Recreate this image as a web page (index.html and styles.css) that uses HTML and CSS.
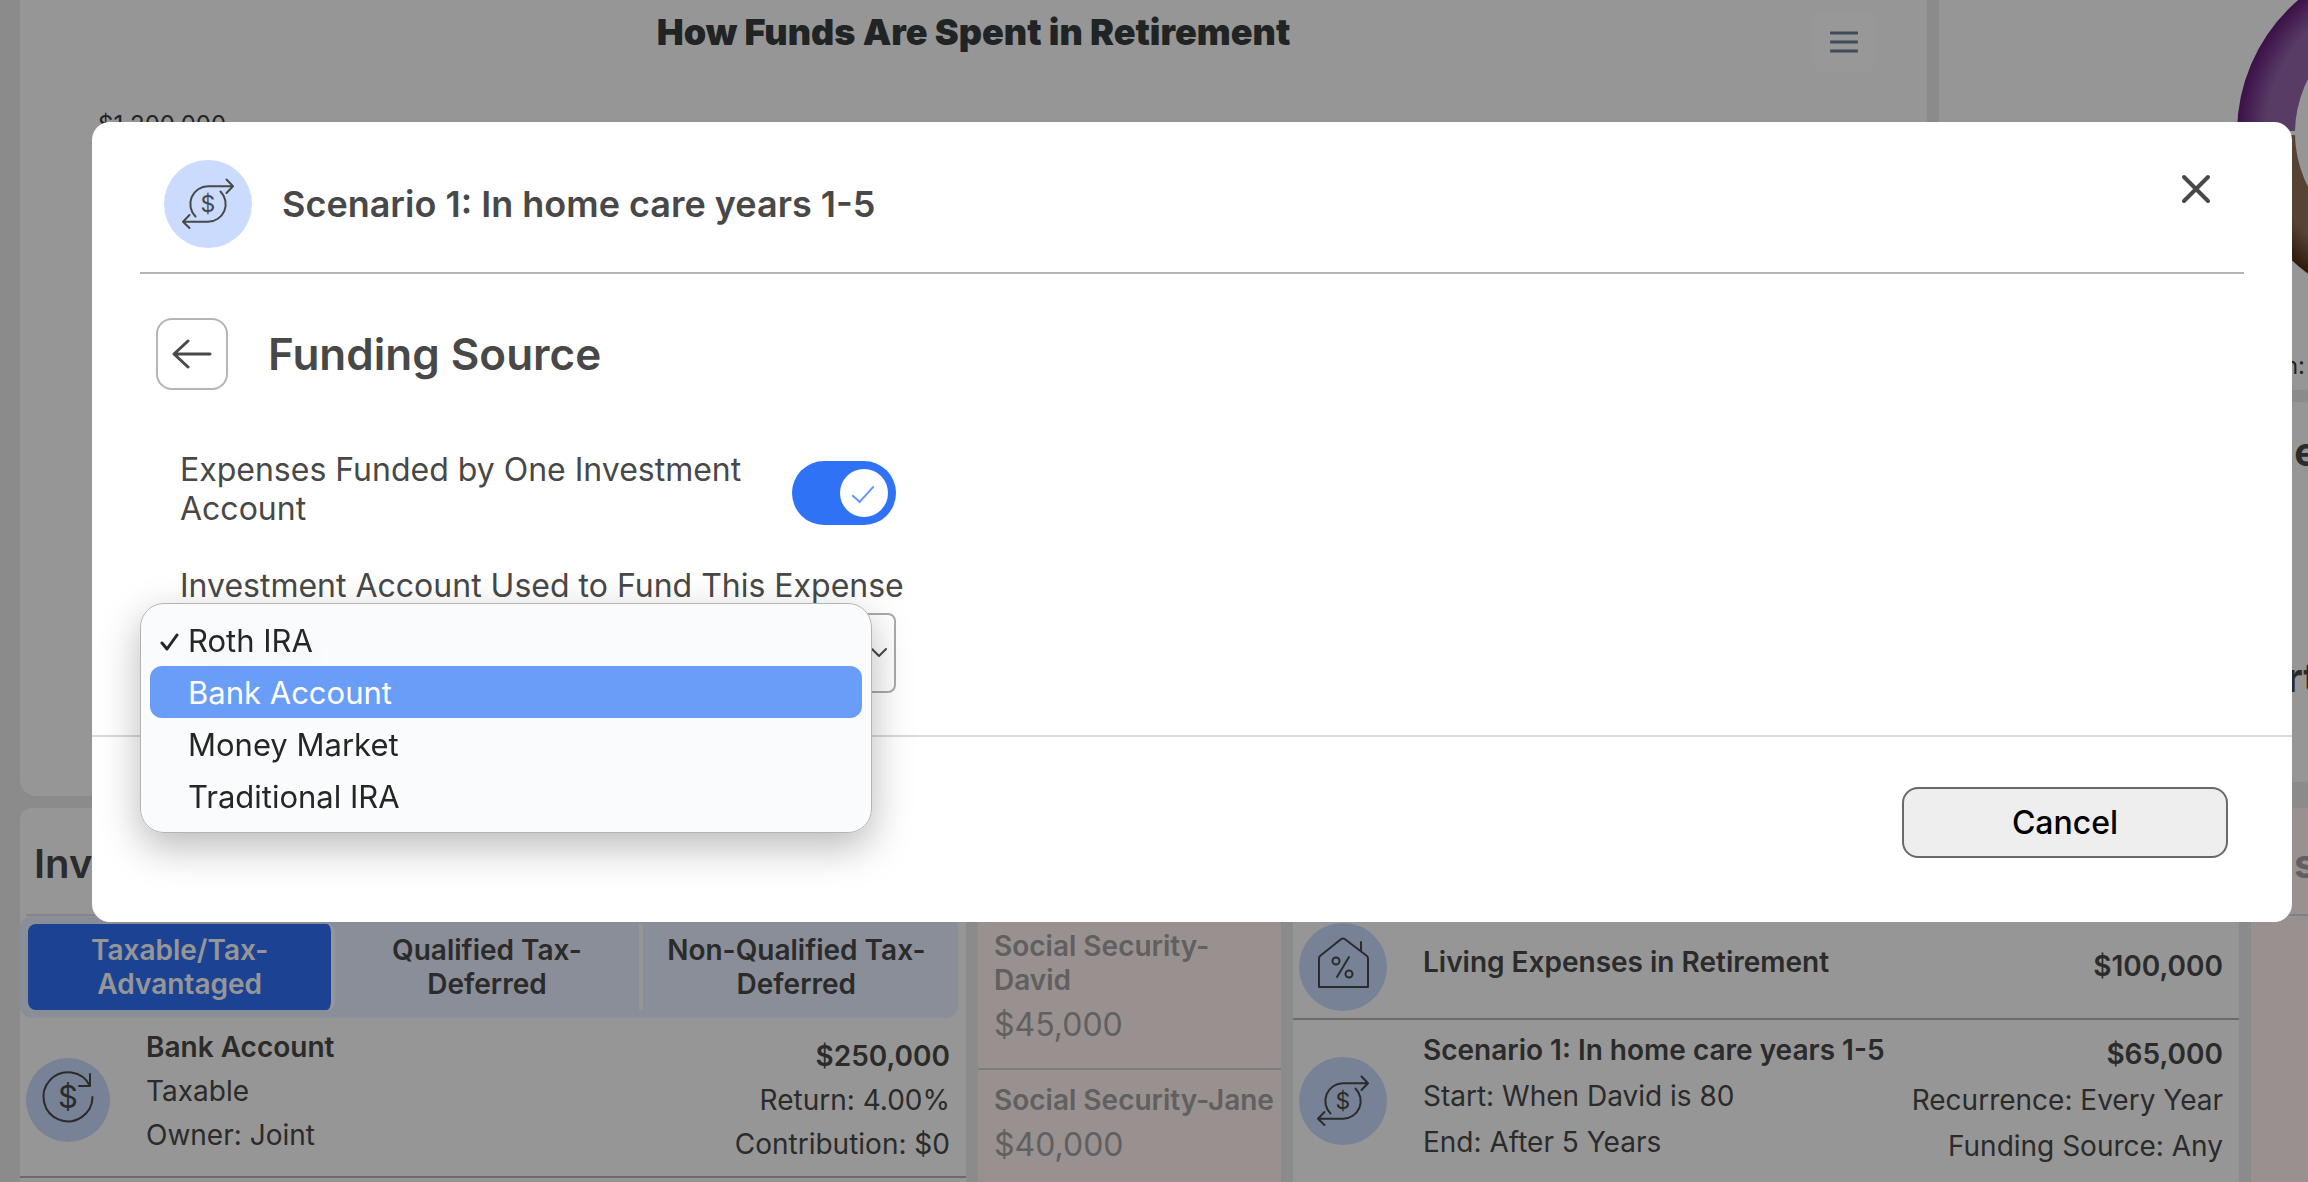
FILE: index.html
```html
<!DOCTYPE html>
<html lang="en">
<head>
    <meta charset="UTF-8">
    <meta name="viewport" content="width=device-width, initial-scale=1.0">
    <title>Funding Source</title>
    <link rel="stylesheet" href="styles.css">
</head>
<body>

<!-- shared icons -->
<svg class="sprite" aria-hidden="true">
    <symbol id="icon-cycle" viewBox="0 0 88 88">
        <path d="M31.500 56.500A17.700 17.700 0 0 1 44 26.300H69M62.500 19.500L69 26.300L62.500 33"/>
        <path d="M56.500 31.500A17.700 17.700 0 0 1 44 61.700H19.500M25.500 55L19 61.700L25.500 68"/>
        <text x="44" y="52" font-size="23">$</text>
    </symbol>
    <symbol id="icon-return" viewBox="0 0 84 84">
        <path d="M64 28A24.5 24.5 0 1 0 66.500 39M64 16V28H53"/>
        <text x="42" y="50" font-size="31">$</text>
    </symbol>
    <symbol id="icon-house" viewBox="0 0 88 88">
        <path d="M20 64V36Q20 34 21 33L41 17Q44 14 47 17L68 33Q69 34 69 36V64ZM62 19V28"/>
        <circle cx="37" cy="38" r="3.500"/>
        <circle cx="50" cy="51" r="3.500"/>
        <path d="M50 34L38 54"/>
    </symbol>
</svg>

<main class="dashboard">
    <div class="top-row">
        <section class="card chart-card">
            <header class="chart-header">
                <h2 class="chart-title">How Funds Are Spent in Retirement</h2>
                <button class="menu-button" type="button" aria-label="Chart menu">
                    <svg width="28" height="24" viewBox="0 0 28 24"><path d="M1 3H27M1 12H27M1 21H27"/></svg>
                </button>
            </header>
            <div class="axis-label">$1,200,000</div>
        </section>

        <div class="side-column">
            <section class="card donut-card">
                <svg class="donut" width="369" height="310" viewBox="0 0 369 310">
                    <defs>
                        <radialGradient id="purple" gradientUnits="userSpaceOnUse" cx="473" cy="133" r="175">
                            <stop offset="0.830" stop-color="#9465aa"/>
                            <stop offset="1" stop-color="#641a78"/>
                        </radialGradient>
                        <radialGradient id="brown" gradientUnits="userSpaceOnUse" cx="473" cy="133" r="175">
                            <stop offset="0.830" stop-color="#8f7158"/>
                            <stop offset="1" stop-color="#4d2b12"/>
                        </radialGradient>
                    </defs>
                    <path d="M298 131A175 175 0 0 1 473 -42V16A117 117 0 0 0 356 131Z" fill="url(#purple)"/>
                    <path d="M298 135A175 175 0 0 0 473 308V250A117 117 0 0 1 356 135Z" fill="url(#brown)"/>
                </svg>
                <div class="legend">n:</div>
            </section>
            <section class="card summary-card">
                <h2 class="side-title">ne</h2>
                <h2 class="side-title">rt</h2>
            </section>
        </div>
    </div>

    <div class="bottom-row">
        <section class="card accounts">
            <h2 class="section-title">Inv</h2>
            <div class="tabs">
                <button class="tab active" type="button">Taxable/Tax-<br>Advantaged</button>
                <button class="tab" type="button">Qualified Tax-<br>Deferred</button>
                <button class="tab" type="button">Non-Qualified Tax-<br>Deferred</button>
            </div>
            <article class="item">
                <div class="badge small"><svg><use href="#icon-return"/></svg></div>
                <div class="details">
                    <strong>Bank Account</strong>
                    <span>Taxable</span>
                    <span>Owner: Joint</span>
                </div>
                <div class="amounts">
                    <strong>$250,000</strong>
                    <span>Return: 4.00%</span>
                    <span>Contribution: $0</span>
                </div>
            </article>
        </section>

        <section class="card income">
            <div class="section-title"></div>
            <article class="income-item">
                <h3>Social Security-<br>David</h3>
                <p>$45,000</p>
            </article>
            <article class="income-item">
                <h3>Social Security-Jane</h3>
                <p>$40,000</p>
            </article>
        </section>

        <section class="card expenses">
            <div class="section-title"></div>
            <article class="item">
                <div class="badge"><svg><use href="#icon-house"/></svg></div>
                <div class="details">
                    <strong>Living Expenses in Retirement</strong>
                </div>
                <div class="amounts">
                    <strong>$100,000</strong>
                </div>
            </article>
            <article class="item">
                <div class="badge"><svg><use href="#icon-cycle"/></svg></div>
                <div class="details">
                    <strong>Scenario 1: In home care years 1-5</strong>
                    <span>Start: When David is 80</span>
                    <span>End: After 5 Years</span>
                </div>
                <div class="amounts">
                    <strong>$65,000</strong>
                    <span>Recurrence: Every Year</span>
                    <span>Funding Source: Any</span>
                </div>
            </article>
        </section>

        <section class="card income assets">
            <h2 class="section-title">s</h2>
        </section>
    </div>
</main>

<div class="overlay">
    <div class="modal" role="dialog" aria-labelledby="modal-title">
        <header class="modal-header">
            <div class="badge"><svg><use href="#icon-cycle"/></svg></div>
            <h1 class="modal-title" id="modal-title">Scenario 1: In home care years 1-5</h1>
            <button class="close-button" type="button" aria-label="Close">
                <svg width="32" height="32" viewBox="0 0 32 32"><path d="M4 4L28 28M28 4L4 28"/></svg>
            </button>
        </header>

        <div class="modal-body">
            <div class="step">
                <button class="back-button" type="button" aria-label="Back">
                    <svg width="40" height="32" viewBox="0 0 40 32"><path d="M38 16H2M16 3L2 16L16 29"/></svg>
                </button>
                <h2 class="step-title">Funding Source</h2>
            </div>

            <form class="funding-form">
                <div class="toggle-row">
                    <label for="one-account">Expenses Funded by One Investment Account</label>
                    <input class="toggle" type="checkbox" id="one-account" checked>
                </div>

                <label class="select-label" for="account">Investment Account Used to Fund This Expense</label>
                <div class="select-wrap">
                    <select id="account" name="account">
                        <option selected>Roth IRA</option>
                        <option>Bank Account</option>
                        <option>Money Market</option>
                        <option>Traditional IRA</option>
                    </select>
                    <svg class="chevron" width="18" height="12" viewBox="0 0 18 12"><path d="M2 2L9 9L16 2"/></svg>
                    <ul class="options" role="listbox" aria-label="Investment accounts">
                        <li role="option" aria-selected="true"><svg class="check" width="20" height="20" viewBox="0 0 20 20"><path d="M2 11L7 17L17 3"/></svg>Roth IRA</li>
                        <li class="highlight" role="option">Bank Account</li>
                        <li role="option">Money Market</li>
                        <li role="option">Traditional IRA</li>
                    </ul>
                </div>
            </form>
        </div>

        <footer class="modal-footer">
            <button class="cancel-button" type="button">Cancel</button>
        </footer>
    </div>
</div>

</body>
</html>
```
FILE: styles.css
```css
* {
    box-sizing: border-box;
}
html {
    height: 100%;
    overflow: hidden;
}
body {
    height: 100%;
    margin: 0;
    overflow: hidden;
    background-color: #e8e8e8;
    color: #484848;
    font-family: Inter, "Liberation Sans", sans-serif;
    font-size: 28px;
}
h1, h2, h3, p, ul {
    margin: 0;
    padding: 0;
}
button, select {
    font-family: inherit;
    cursor: pointer;
}
svg {
    display: block;
    fill: none;
    stroke: currentColor;
    stroke-width: 2;
    stroke-linecap: round;
    stroke-linejoin: round;
}
.sprite {
    display: none;
}
symbol text {
    fill: currentColor;
    stroke: none;
    text-anchor: middle;
    font-weight: 400;
}

/* Dashboard */
.dashboard {
    height: 100%;
    padding-left: 20px;
    overflow: hidden;
}
.card {
    background-color: #fafafa;
    border-radius: 12px;
}
.top-row {
    display: flex;
    gap: 12px;
    height: 796px;
    margin-bottom: 12px;
}
.chart-card {
    flex: 1;
    border-radius: 0 0 16px 16px;
}
.chart-header {
    display: flex;
    align-items: flex-start;
    padding: 12px 51px 0 115px;
}
.chart-title {
    flex: 1;
    color: #383d3f;
    font-size: 36px;
    font-weight: 900;
    line-height: 40px;
    text-align: center;
}
.menu-button {
    display: flex;
    align-items: center;
    justify-content: center;
    width: 64px;
    height: 60px;
    border: none;
    border-radius: 12px;
    background-color: #fdfdfd;
    color: #6f7e96;
}
.menu-button svg {
    stroke-width: 3;
}
.axis-label {
    padding: 39px 0 0 78px;
    color: #383d3f;
    font-size: 24px;
    line-height: 28px;
}
.side-column {
    display: flex;
    flex-direction: column;
    gap: 12px;
    width: 369px;
}
.side-column .card {
    border-radius: 0;
    overflow: hidden;
}
.donut-card {
    height: 390px;
}
.donut path {
    stroke: none;
}
.legend {
    padding: 41px 3px 0 0;
    color: #383d3f;
    font-size: 24px;
    line-height: 30px;
    text-align: right;
}
.summary-card {
    height: 380px;
    padding-top: 26px;
}
.side-title {
    height: 226px;
    margin-right: -10px;
    font-size: 40px;
    font-weight: 700;
    line-height: 48px;
    text-align: right;
}
.bottom-row {
    display: grid;
    grid-template-columns: minmax(0, 946fr) minmax(0, 303fr) minmax(0, 946fr) 57px;
    gap: 12px;
    height: 440px;
}
.section-title {
    height: 108px;
    margin: 0 6px;
    padding: 32px 8px 0;
    border-bottom: 2px solid #e0e0e0;
    font-size: 40px;
    font-weight: 600;
    line-height: 48px;
}

.tabs {
    display: grid;
    grid-template-columns: repeat(3, 1fr);
    margin-right: 8px;
    padding: 8px;
    border-radius: 12px;
    background-color: #e6edfd;
}
.tab {
    height: 86px;
    padding: 0;
    border: none;
    border-right: 4px solid #fafafa;
    background-color: transparent;
    background-clip: padding-box;
    color: #484848;
    font-size: 28px;
    font-weight: 600;
    line-height: 34px;
}
.tab:last-child {
    border-right: none;
}
.tab.active {
    border-radius: 8px;
    background-color: #2f6ef5;
    color: #fafafa;
}

.item {
    display: flex;
    align-items: center;
    gap: 36px;
    padding: 0 16px 0 6px;
    border-bottom: 2px solid #b3b3b3;
    line-height: 46px;
    white-space: nowrap;
}
.item strong {
    font-weight: 600;
}
.details, .amounts {
    display: flex;
    flex-direction: column;
}
.details {
    flex: 1;
    min-width: 0;
    padding-bottom: 10px;
}
.amounts {
    padding-bottom: 2px;
    text-align: right;
}
.accounts .item {
    height: 160px;
    padding-top: 6px;
    line-height: 44px;
}
.accounts .details {
    padding-bottom: 18px;
}
.accounts .amounts {
    padding-bottom: 0;
}
.expenses .item {
    height: 104px;
}
.expenses .item:last-child {
    height: 164px;
}

.badge {
    flex: none;
    width: 88px;
    height: 88px;
    border-radius: 50%;
    background-color: #cbdbfe;
}
.badge svg {
    width: 100%;
    height: 100%;
}
.badge.small {
    width: 84px;
    height: 84px;
}
.item .badge {
    background-color: #c6d9fa;
}

.income {
    background-color: #fff2ef;
    color: #a0a0a0;
}
.income-item {
    padding: 13px 0 23px 16px;
    border-bottom: 2px solid #d0d0d0;
    white-space: nowrap;
}
.income-item h3 {
    font-size: 28px;
    font-weight: 600;
    line-height: 34px;
}
.income-item p {
    margin-top: 8px;
    font-size: 32px;
    line-height: 40px;
}
.assets {
    border-radius: 12px 0 0 0;
    overflow: hidden;
}
.assets .section-title {
    margin: 0;
    padding-right: 0;
    padding-left: 43px;
    border-color: #cfd6e4;
    font-weight: 700;
}

/* Modal */
.overlay {
    position: fixed;
    inset: 0;
    padding: 122px 16px 0 92px;
    background-color: rgba(0, 0, 0, 0.4);
}
.modal {
    border-radius: 18px;
    background-color: #ffffff;
}
.modal-header {
    display: flex;
    align-items: center;
    gap: 30px;
    margin: 0 48px;
    padding: 38px 20px 24px 24px;
    border-bottom: 2px solid #b5b5b5;
}
.modal-title {
    flex: 1;
    font-size: 36px;
    font-weight: 600;
    line-height: 44px;
}
.close-button {
    display: flex;
    align-items: center;
    align-self: flex-start;
    justify-content: center;
    width: 56px;
    height: 58px;
    padding: 0;
    border: none;
    background: none;
    color: #484848;
}
.close-button svg {
    stroke-width: 4;
}
.modal-body {
    padding: 44px 64px 42px;
}
.step {
    display: flex;
    align-items: center;
    gap: 40px;
    margin-bottom: 60px;
}
.back-button {
    display: flex;
    align-items: center;
    justify-content: center;
    width: 72px;
    height: 72px;
    padding: 0;
    border: 2px solid #b5b5b5;
    border-radius: 16px;
    background-color: #ffffff;
    color: #484848;
}
.back-button svg {
    stroke-width: 3;
}
.step-title {
    font-size: 44px;
    font-weight: 600;
    line-height: 52px;
}
.funding-form {
    width: 740px;
    padding-left: 24px;
    font-size: 32px;
    line-height: 39px;
}
.toggle-row {
    display: flex;
    align-items: flex-start;
    justify-content: space-between;
    margin-bottom: 38px;
}
.toggle-row label {
    width: 590px;
}
.toggle {
    appearance: none;
    position: relative;
    width: 104px;
    height: 64px;
    margin: 11px 0 0;
    border-radius: 32px;
    background-color: #3072f6;
}
.toggle::before {
    content: "";
    position: absolute;
    top: 8px;
    right: 8px;
    width: 48px;
    height: 48px;
    border-radius: 50%;
    background-color: #ffffff;
}
.toggle::after {
    content: "";
    position: absolute;
    top: 25px;
    right: 22px;
    width: 20px;
    height: 9px;
    border-bottom: 2px solid #6496f8;
    border-left: 2px solid #6496f8;
    transform: rotate(-48deg);
}
.select-label {
    display: block;
    margin-bottom: 8px;
    white-space: nowrap;
}
.select-wrap {
    position: relative;
}
select {
    display: block;
    appearance: none;
    width: 100%;
    height: 80px;
    padding: 0 32px 0 10px;
    border: 2px solid #aaaaaa;
    border-radius: 8px;
    background-color: #ffffff;
    color: #484848;
    font-size: 32px;
}
.chevron {
    position: absolute;
    top: 34px;
    right: 8px;
}

/* Open list of the select */
.options {
    position: absolute;
    top: -10px;
    left: -40px;
    width: 732px;
    padding: 10px 9px;
    border: 1px solid #b4b4b4;
    border-radius: 24px;
    background-color: rgba(250, 251, 252, 0.95);
    backdrop-filter: blur(8px);
    box-shadow: 0 14px 40px rgba(0, 0, 0, 0.28);
    color: #262626;
    font-size: 31px;
    line-height: 50px;
    list-style: none;
}
.options li {
    position: relative;
    padding: 2px 0 0 38px;
    border-radius: 12px;
}
.options .highlight {
    background-color: #699df8;
    color: #ffffff;
}
.check {
    position: absolute;
    top: 18px;
    left: 10px;
    stroke-width: 3;
}

.modal-footer {
    display: flex;
    justify-content: flex-end;
    padding: 50px 64px 64px;
    border-top: 2px solid #d9d9d9;
}
.cancel-button {
    width: 326px;
    height: 71px;
    border: 2px solid #696969;
    border-radius: 16px;
    background-color: #eeeeee;
    color: #000000;
    font-size: 32px;
    font-weight: 500;
}
```
